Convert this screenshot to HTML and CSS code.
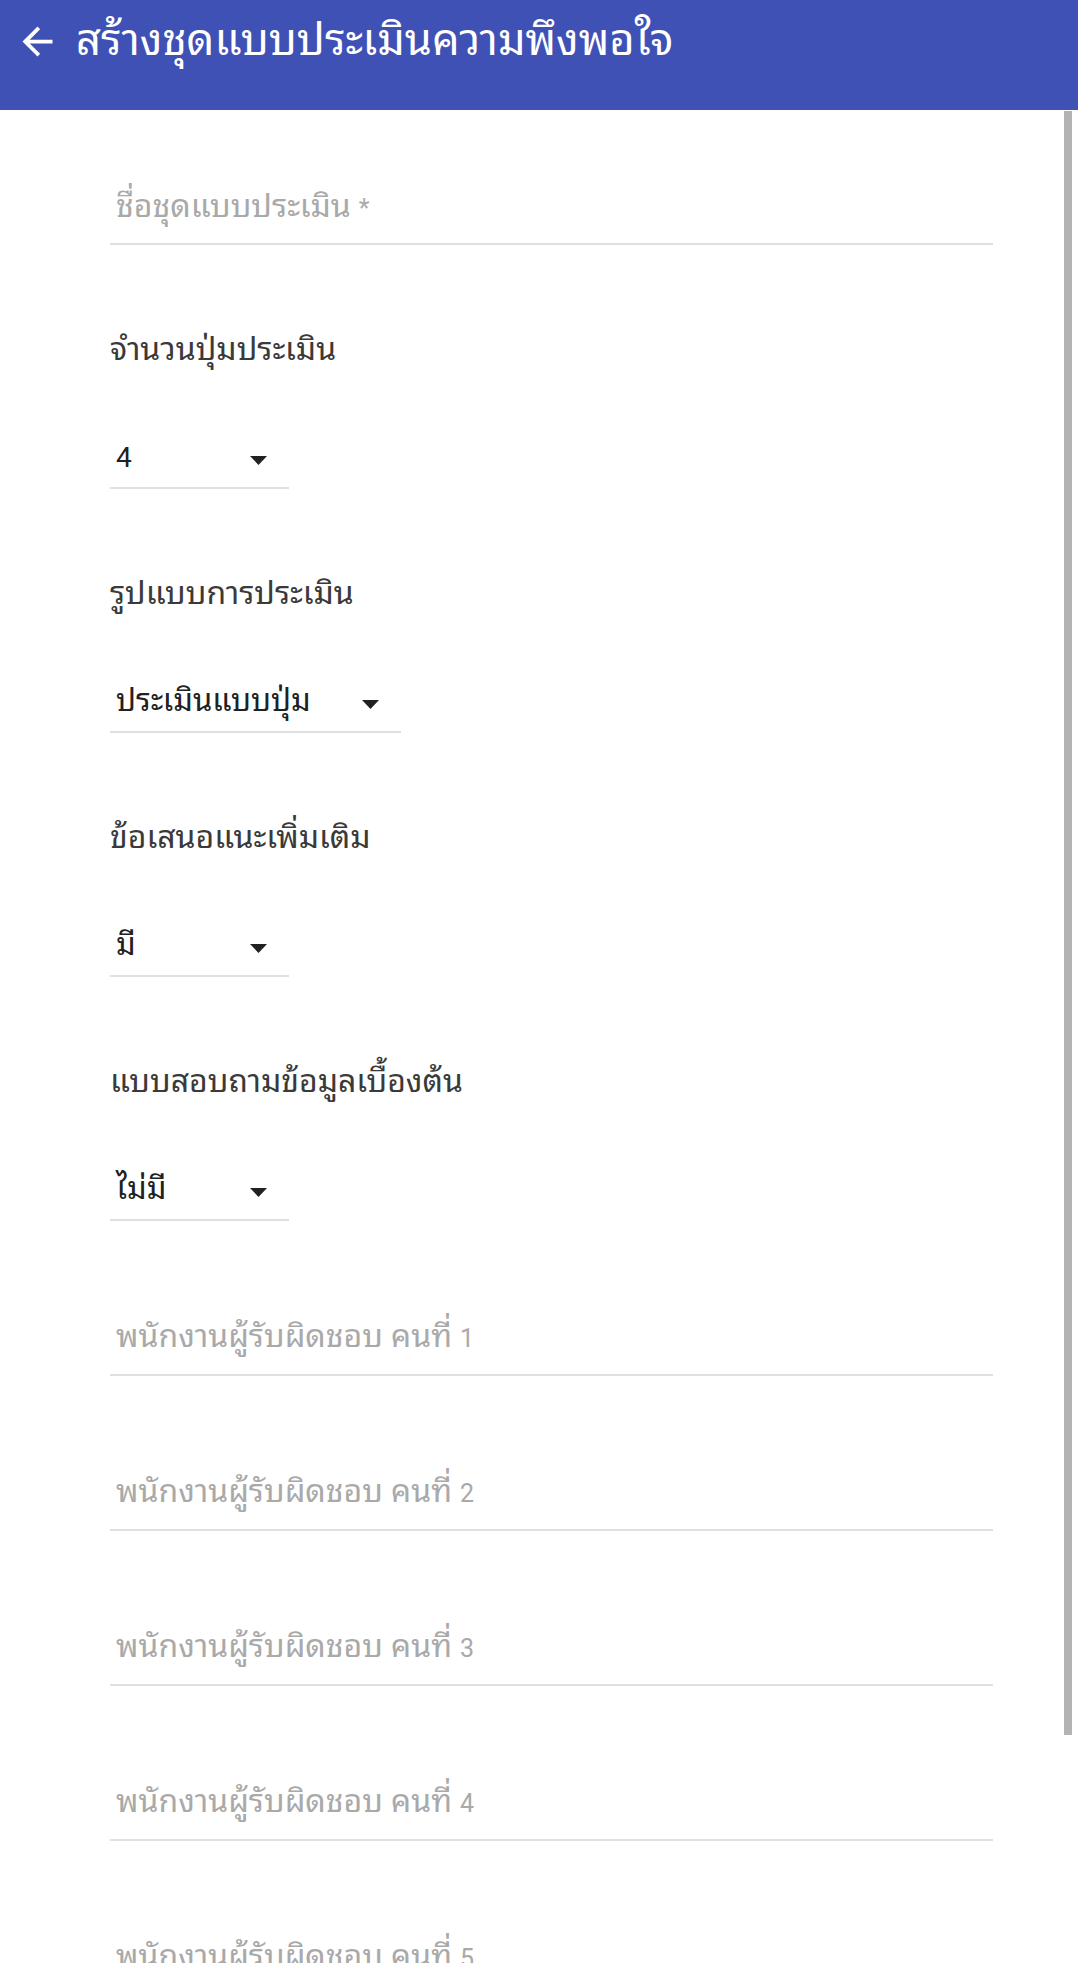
FILE: index.html
```html
<!DOCTYPE html>
<html lang="th">
<head>
<meta charset="utf-8">
<title>สร้างชุดแบบประเมินความพึงพอใจ</title>
<link rel="stylesheet" href="styles.css">
</head>
<body>
<header class="appbar">
  <svg class="back-icon" viewBox="0 0 24 24" width="45" height="45" aria-hidden="true">
    <path d="M20 11H7.83l5.59-5.59L12 4l-8 8 8 8 1.41-1.41L7.83 13H20v-2z" fill="#ffffff"/>
  </svg>
  <h1 class="appbar-title">สร้างชุดแบบประเมินความพึงพอใจ</h1>
</header>

<main class="form">
  <div class="text-field first"><span class="placeholder">ชื่อชุดแบบประเมิน <span class="latin">*</span></span></div>

  <div class="group">
    <div class="label">จำนวนปุ่มประเมิน</div>
    <div class="select"><span class="select-value"><span class="latin-select">4</span></span><svg class="caret" viewBox="0 0 17 9" width="17" height="9"><polygon points="0,0 17,0 8.5,9" fill="#212121"/></svg></div>
  </div>

  <div class="group">
    <div class="label">รูปแบบการประเมิน</div>
    <div class="select"><span class="select-value">ประเมินแบบปุ่ม</span><svg class="caret" viewBox="0 0 17 9" width="17" height="9"><polygon points="0,0 17,0 8.5,9" fill="#212121"/></svg></div>
  </div>

  <div class="group">
    <div class="label">ข้อเสนอแนะเพิ่มเติม</div>
    <div class="select"><span class="select-value">มี</span><svg class="caret" viewBox="0 0 17 9" width="17" height="9"><polygon points="0,0 17,0 8.5,9" fill="#212121"/></svg></div>
  </div>

  <div class="group">
    <div class="label">แบบสอบถามข้อมูลเบื้องต้น</div>
    <div class="select"><span class="select-value">ไม่มี</span><svg class="caret" viewBox="0 0 17 9" width="17" height="9"><polygon points="0,0 17,0 8.5,9" fill="#212121"/></svg></div>
  </div>

  <div class="text-field"><span class="placeholder">พนักงานผู้รับผิดชอบ คนที่ <span class="latin">1</span></span></div>
  <div class="text-field"><span class="placeholder">พนักงานผู้รับผิดชอบ คนที่ <span class="latin">2</span></span></div>
  <div class="text-field"><span class="placeholder">พนักงานผู้รับผิดชอบ คนที่ <span class="latin">3</span></span></div>
  <div class="text-field"><span class="placeholder">พนักงานผู้รับผิดชอบ คนที่ <span class="latin">4</span></span></div>
  <div class="text-field"><span class="placeholder">พนักงานผู้รับผิดชอบ คนที่ <span class="latin">5</span></span></div>
</main>

<div class="scroll-thumb"></div>
</body>
</html>
```

FILE: styles.css
```css
html, body {
  margin: 0;
  padding: 0;
  height: 1963px;
  overflow: hidden;
  background: #ffffff;
}

body {
  font-family: Roboto, "Noto Sans Thai Looped", "Noto Looped Thai", "Noto Sans", "Noto Sans Thai", sans-serif;
  color: #212121;
}

.appbar {
  height: 110px;
  box-sizing: border-box;
  background: #3f51b5;
  display: flex;
  align-items: flex-start;
  padding: 18px 0 0 15px;
}

.back-icon {
  flex: none;
  display: block;
  margin-top: 1px;
}

.appbar-title {
  margin: 0 0 0 16px;
  font-size: 43.5px;
  line-height: 45px;
  font-weight: 400;
  color: #ffffff;
  white-space: nowrap;
}

.form {
  padding-left: 110px;
  width: 883px;
}

.text-field {
  margin-top: 95px;
  padding-bottom: 18px;
  border-bottom: 2px solid #e0e0e0;
  line-height: 40px;
  font-size: 32px;
  padding-left: 6px;
}

.text-field.first {
  margin-top: 76px;
  padding-bottom: 17px;
}

.placeholder {
  color: #a9a9a9;
}

.latin {
  font-size: 25px;
  line-height: 1;
}

.group {
  margin-top: 84px;
}

.label {
  font-size: 32px;
  line-height: 40px;
  color: #3a3a3a;
}

.select {
  margin-top: 68px;
  display: flex;
  align-items: center;
  width: max-content;
  min-width: 179px;
  box-sizing: border-box;
  padding: 0 22px 10px 6px;
  border-bottom: 2px solid #e0e0e0;
  font-size: 31px;
  line-height: 40px;
  color: #212121;
}

.select-value {
  flex: 1;
  padding-right: 51px;
}

.latin-select {
  font-size: 28px;
  line-height: 1;
}

.caret {
  flex: none;
  display: block;
  margin-top: 6px;
}

.scroll-thumb {
  position: fixed;
  left: 1064px;
  top: 111px;
  width: 8px;
  height: 1624px;
  background: #b3b3b3;
}
```
